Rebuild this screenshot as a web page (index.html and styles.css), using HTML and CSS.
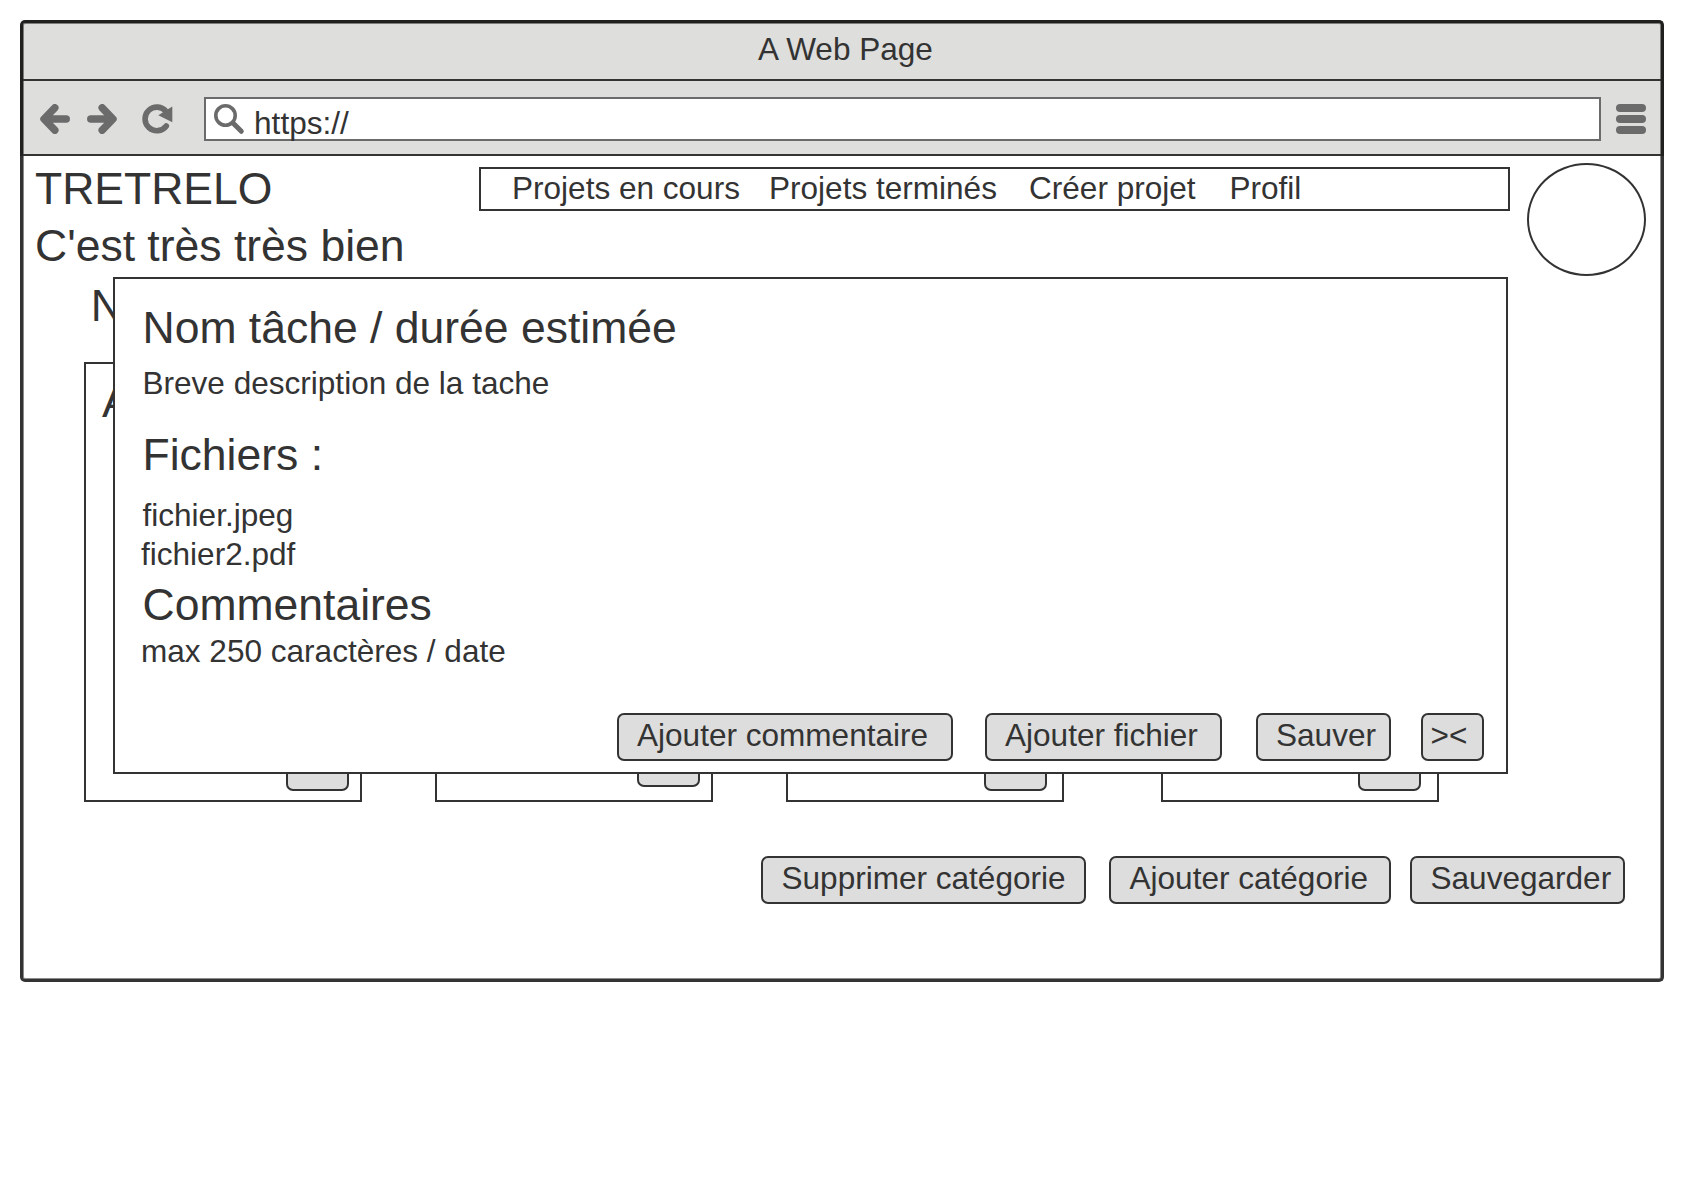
FILE: index.html
```
<!DOCTYPE html>
<html lang="fr">
<head>
<meta charset="utf-8">
<title>Tretrelo</title>
<link rel="stylesheet" href="styles.css">
</head>
<body>
<div class="window">
  <header class="chrome">
    <div class="title-bar">A Web Page</div>
    <div class="toolbar">
      <svg class="icon back" width="30" height="30" viewBox="0 0 30 30"><path d="M14.800 3.800 4 15 14.800 26.200M4.500 15H26.200"/></svg>
      <svg class="icon forward" width="30" height="30" viewBox="0 0 30 30"><path d="M15.200 3.800 26 15 15.200 26.200M25.500 15H3.800"/></svg>
      <svg class="reload" width="31" height="30" viewBox="0 0 31 30"><path class="ring" d="M24.200 7.700A11.800 11.800 0 1 0 24.300 22"/><path class="head" d="M30.300 2.600V18.300L16.300 11.300Z"/></svg>
      <div class="address">
        <svg class="search" width="31" height="31" viewBox="0 0 31 31"><circle cx="11.500" cy="11.500" r="9.700"/><path d="M19.500 19.500 27.300 27.300"/></svg>
        <span>https://</span>
      </div>
      <div class="menu"><i></i><i></i><i></i></div>
    </div>
  </header>
  <main class="page">
    <div class="top">
      <div class="brand">
        <div class="large">TRETRELO</div>
        <div class="large tagline">C'est très très bien</div>
      </div>
      <nav class="nav">
        <a class="nav-current">Projets en cours</a>
        <a class="nav-done">Projets terminés</a>
        <a class="nav-create">Créer projet</a>
        <a>Profil</a>
      </nav>
      <div class="avatar"></div>
    </div>
    <div class="large project">N</div>
    <div class="board">
      <div class="card first"><div class="large">A</div><div class="btn stub"></div></div>
      <div class="card second-card"><div class="btn stub"></div></div>
      <div class="card third"><div class="btn stub"></div></div>
      <div class="card fourth"><div class="btn stub"></div></div>
    </div>
    <div class="actions">
      <div class="btn remove-category">Supprimer catégorie</div>
      <div class="btn add-category">Ajouter catégorie</div>
      <div class="btn save-all">Sauvegarder</div>
    </div>
    <section class="modal">
      <div class="large">Nom tâche / durée estimée</div>
      <div class="description">Breve description de la tache</div>
      <div class="large files">Fichiers :</div>
      <div class="file">fichier.jpeg</div>
      <div class="file second">fichier2.pdf</div>
      <div class="large comments">Commentaires</div>
      <div class="comment">max 250 caractères / date</div>
      <div class="modal-actions">
        <div class="btn add-comment">Ajouter commentaire</div>
        <div class="btn add-file">Ajouter fichier</div>
        <div class="btn save">Sauver</div>
        <div class="btn close">&gt;&lt;</div>
      </div>
    </section>
  </main>
</div>
</body>
</html>
```
FILE: styles.css
```
* { box-sizing: border-box; }

body {
  margin: 0;
  padding: 20px;
  background: #fff;
  color: #333;
  font: 31.550px/36px "Liberation Sans", Arial, sans-serif;
  white-space: nowrap;
}

.window {
  width: 1644px;
  height: 962px;
  display: flex;
  flex-direction: column;
}

.large { padding-top: 1px; font-size: 44.500px; line-height: 49px; }

/* Browser chrome */
.chrome {
  height: 136px;
  background: #dededc;
  border: 3px solid #20211f;
  border-bottom: 0;
  border-radius: 5px 5px 0 0;
  box-shadow: inset 0 1px #7c7c7a, inset 1px 0 #7c7c7a, inset -1px 0 #7c7c7a;
}

.title-bar {
  height: 58px;
  padding: 8px 0 0 7px;
  border-bottom: 2px solid #333;
  text-align: center;
}

.toolbar {
  height: 75px;
  padding: 16px 15px 0 17px;
  border-bottom: 2px solid #333;
  display: flex;
  align-items: flex-start;
}

.icon, .reload { margin-top: 7px; fill: none; stroke: #6b6b6b; flex: none; }
.icon { stroke-width: 7.500; stroke-linecap: round; stroke-linejoin: round; }
.forward { margin-left: 17px; }
.reload { margin-left: 24.700px; }
.ring { stroke-width: 5.600; stroke-linecap: round; }
.head { fill: #6b6b6b; stroke: none; }

.address {
  width: 1397px;
  height: 44px;
  flex: none;
  margin-left: 31.500px;
  padding: 5px 0 0 8px;
  background: #fff;
  border: 2px solid #6b6b6b;
  display: flex;
  align-items: flex-start;
}
.address span { margin: 1px 0 0 8.900px; }
.search { fill: none; stroke: #6b6b6b; stroke-width: 3.600; }
.search path { stroke-width: 5; stroke-linecap: round; }

.menu {
  width: 30px;
  flex: none;
  margin: 7px 0 0 14.500px;
  display: flex;
  flex-direction: column;
  gap: 3.500px;
}
.menu i { height: 7.700px; border-radius: 4px; background: #6b6b6b; }

/* Page content */
.page {
  position: relative;
  flex: 1;
  border: 3px solid #333;
  border-top: 0;
  border-radius: 0 0 5px 5px;
  box-shadow: inset 0 -1px #8c8c8c, inset 1px 0 #8c8c8c, inset -1px 0 #8c8c8c;
}

.top { height: 121px; display: flex; align-items: flex-start; }
.brand { width: 456px; padding: 7px 0 0 12px; }
.tagline { margin-top: 7px; }

.nav {
  width: 1031px;
  height: 44px;
  margin-top: 11px;
  padding: 1px 0 0 31px;
  border: 2px solid #333;
  display: flex;
}
.nav-current { width: 257px; }
.nav-done { width: 260px; }
.nav-create { width: 200.500px; }

.avatar {
  width: 119px;
  height: 113px;
  margin: 7px 0 0 16.500px;
  border: 2px solid #333;
  border-radius: 50%;
}

.project { margin: 3px 0 0 67.700px; }

.board { display: flex; margin: 32px 0 0 61px; }
.card {
  width: 278px;
  height: 440px;
  padding: 12px 11px 9px 16px;
  border: 2px solid #333;
  display: flex;
  flex-direction: column;
}
.first { margin-right: 73px; }
.second-card { margin-right: 73px; padding-bottom: 13px; }
.third { margin-right: 97px; padding-right: 15px; }
.fourth { padding-right: 16px; }

.btn {
  height: 48px;
  padding: 2px 0 0 18.500px;
  background: #ddd;
  border: 2px solid #333;
  border-radius: 7px;
}
.stub { width: 63px; margin-top: auto; align-self: flex-end; }

.actions { display: flex; margin: 54px 0 0 738px; }
.remove-category { width: 325px; margin-right: 23px; }
.add-category { width: 282px; margin-right: 19px; }
.save-all { width: 215px; }

/* Task dialog, floating over the board */
.modal {
  position: absolute;
  left: 90px;
  top: 121px;
  width: 1395px;
  height: 497px;
  padding: 23px 22.500px 0 27.500px;
  background: #fff;
  border: 2px solid #333;
}
.description { margin-top: 13px; }
.files { margin-top: 28px; }
.file { margin-top: 18px; }
.second { margin: 3px 0 0 -1.500px; }
.comments { margin-top: 7px; }
.comment { margin: 4px 0 0 -1.500px; }

.modal-actions { display: flex; justify-content: flex-end; margin-top: 44px; }
.add-comment { width: 336px; margin-right: 32px; }
.add-file { width: 237.500px; margin-right: 33.500px; }
.save { width: 135.500px; margin-right: 30px; }
.close { width: 62.500px; padding-left: 7.500px; }
```
